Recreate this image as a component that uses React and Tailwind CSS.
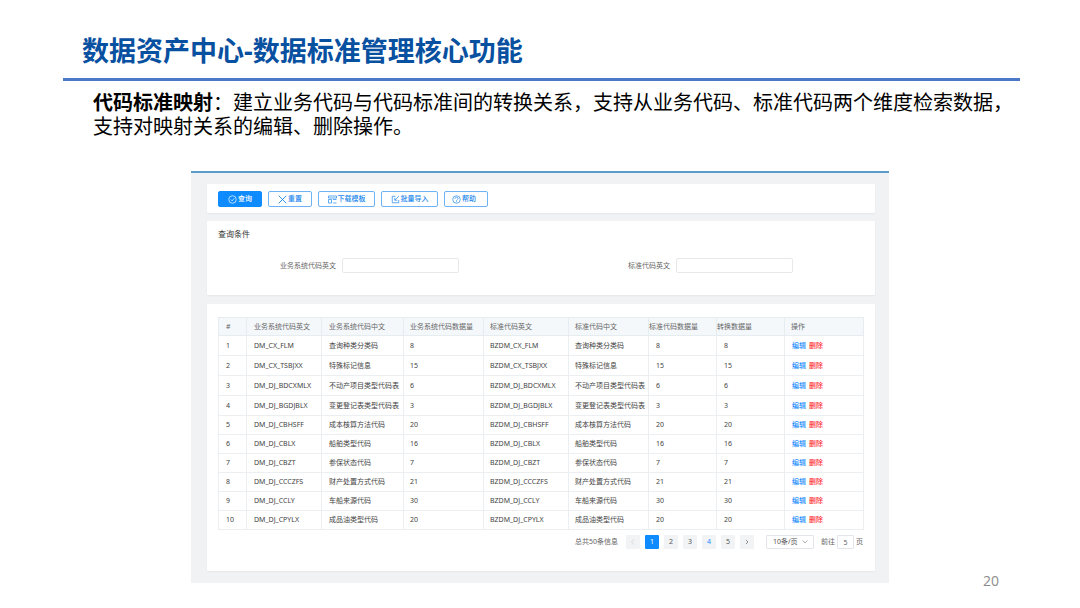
import { useState } from 'react';

const columns = [
    { title: '#', width: 'w-[28px]', pad: 'pl-[7px]' },
    { title: '业务系统代码英文', width: 'w-[75px]', pad: 'pl-[7px]' },
    { title: '业务系统代码中文', width: 'w-[82px]', pad: 'pl-[7px]' },
    { title: '业务系统代码数据量', width: 'w-[80px]', pad: 'pl-[6px]' },
    { title: '标准代码英文', width: 'w-[85px]', pad: 'pl-[6px]' },
    { title: '标准代码中文', width: 'w-[80px]', pad: 'pl-[6px]' },
    { title: '标准代码数据量', width: 'w-[68px]', pad: 'pl-0' },
    { title: '转换数据量', width: 'w-[68px]', pad: 'pl-0' },
    { title: '操作', width: 'w-[79px]', pad: 'pl-[6px]' },
];

const rows = [
    { code: 'DM_CX_FLM', name: '查询种类分类码', count: 8 },
    { code: 'DM_CX_TSBJXX', name: '特殊标记信息', count: 15 },
    { code: 'DM_DJ_BDCXMLX', name: '不动产项目类型代码表', count: 6 },
    { code: 'DM_DJ_BGDJBLX', name: '变更登记表类型代码表', count: 3 },
    { code: 'DM_DJ_CBHSFF', name: '成本核算方法代码', count: 20 },
    { code: 'DM_DJ_CBLX', name: '船舶类型代码', count: 16 },
    { code: 'DM_DJ_CBZT', name: '参保状态代码', count: 7 },
    { code: 'DM_DJ_CCCZFS', name: '财产处置方式代码', count: 21 },
    { code: 'DM_DJ_CCLY', name: '车船来源代码', count: 30 },
    { code: 'DM_DJ_CPYLX', name: '成品油类型代码', count: 20 },
];

const Icon = ({ children }) => (
    <svg viewBox="0 0 18 18" fill="none" stroke="currentColor" strokeWidth="1.4" className="w-[9px] h-[9px] shrink-0" aria-hidden="true">
        {children}
    </svg>
);

const SearchIcon = () => (
    <Icon>
        <circle cx="9" cy="9" r="7.5" />
        <path d="M5.5 9l2.7 2.8 4.6-5.2" />
    </Icon>
);

const ResetIcon = () => (
    <Icon>
        <path d="M1.5 1.5l15 15M16.5 1.5l-15 15" strokeWidth="1.8" />
    </Icon>
);

const TemplateIcon = () => (
    <Icon>
        <path d="M1 2h16v4H1zM1 9h6v7H1zM10 9h7M10 16h7" />
    </Icon>
);

const ImportIcon = () => (
    <Icon>
        <path d="M9 2.500H2.500v13h13V10" />
        <path d="M16 2L8 10M7.500 5.500v5h5" />
    </Icon>
);

const HelpIcon = () => (
    <Icon>
        <circle cx="9" cy="9" r="7.5" />
        <path d="M6 7.500C6 3.500 12 3.500 12 7c0 1.800-3 2-3 4.500M9 12.500v1.700" />
    </Icon>
);

const actions = [
    { label: '查询', icon: SearchIcon, style: 'w-[44px] border-[#0d8bff] bg-[#0d8bff] text-white' },
    { label: '重置', icon: ResetIcon, style: 'w-[44px] border-[#6db4f6] bg-white text-[#1b87ee]' },
    { label: '下载模板', icon: TemplateIcon, style: 'w-[57px] border-[#6db4f6] bg-white text-[#1b87ee]' },
    { label: '批量导入', icon: ImportIcon, style: 'w-[57px] border-[#6db4f6] bg-white text-[#1b87ee]' },
    { label: '帮助', icon: HelpIcon, style: 'w-[44px] pr-[4px] border-[#6db4f6] bg-white text-[#1b87ee]' },
];

const SearchField = ({ id, label }) => (
    <div className="flex items-center gap-[6px]">
        <label htmlFor={id} className="w-[129px] text-right text-[#666]">{label}</label>
        <input id={id} type="text" className="w-[117px] h-[15px] px-1 bg-white border border-[#e6e8eb] rounded-[2px] outline-none" />
    </div>
);

const MappingTable = () => (
    <table className="w-full table-fixed border-collapse text-left text-[#444]">
        <thead>
            <tr className="h-[18px] bg-[#f4f8fb] text-[#666]">
                {columns.map((col) => (
                    <th key={col.title} className={`${col.width} ${col.pad} border border-[#e6edf1] font-normal whitespace-nowrap`}>{col.title}</th>
                ))}
            </tr>
        </thead>
        <tbody>
            {rows.map((row, i) => (
                <tr key={row.code} className={i < 4 ? 'h-[20px]' : 'h-[19px]'}>
                    {[i + 1, row.code, row.name, row.count, `BZ${row.code}`, row.name, row.count, row.count].map((value, j) => (
                        <td key={j} className={`${j >= 3 && j <= 5 ? 'pl-[6px]' : 'pl-[7px]'} border border-[#eceff1] whitespace-nowrap`}>{value}</td>
                    ))}
                    <td className="pl-[7px] border border-[#eceff1] whitespace-nowrap font-medium">
                        <span className="flex gap-[3px]">
                            <a href="#edit" className="text-[#1b8dff]">编辑</a>
                            <a href="#delete" className="text-[#ff2a32]">删除</a>
                        </span>
                    </td>
                </tr>
            ))}
        </tbody>
    </table>
);

const Pagination = () => {
    const [page, setPage] = useState(1);
    const [jump, setJump] = useState('5');

    const pageStyle = (n) => {
        if (n === page) return 'bg-[#0d8bff] text-white';
        if (n === 4) return 'bg-[#f1f3f5] text-[#1b8dff]';
        return 'bg-[#f1f3f5] text-[#555]';
    };

    return (
        <div className="mt-[5px] flex items-center justify-end text-[#666]">
            <span>总共50条信息</span>
            <div className="ml-[8px] flex gap-[5px]">
                <button aria-label="上一页" onClick={() => setPage(Math.max(1, page - 1))} className="w-[14px] h-[14px] flex items-center justify-center rounded-[1px] bg-[#f1f3f5] text-[#c8ccd2]">
                    <svg viewBox="0 0 6 6" fill="none" stroke="currentColor" className="w-[6px] h-[6px]"><path d="M4 .5L1.500 3 4 5.500" strokeWidth=".7" /></svg>
                </button>
                {[1, 2, 3, 4, 5].map((n) => (
                    <button key={n} onClick={() => setPage(n)} className={`w-[14px] h-[14px] rounded-[1px] ${pageStyle(n)}`}>{n}</button>
                ))}
                <button aria-label="下一页" onClick={() => setPage(Math.min(5, page + 1))} className="w-[14px] h-[14px] flex items-center justify-center rounded-[1px] bg-[#f1f3f5] text-[#666]">
                    <svg viewBox="0 0 6 6" fill="none" stroke="currentColor" className="w-[6px] h-[6px]"><path d="M2 1L4 3 2 5" strokeWidth=".7" /></svg>
                </button>
            </div>
            <div className="relative ml-[12px]">
                <select aria-label="每页条数" className="block w-[48px] h-[14px] pl-[6px] leading-[12px] appearance-none bg-white border border-[#e2e5e9] rounded-[1px] text-[#555]">
                    <option>10条/页</option>
                    <option>20条/页</option>
                    <option>50条/页</option>
                </select>
                <svg viewBox="0 0 6 6" fill="none" stroke="#999" strokeWidth=".8" className="absolute right-[6px] top-[4px] w-[6px] h-[6px] pointer-events-none"><path d="M.5 1.500L3 4l2.500-2.500" /></svg>
            </div>
            <label htmlFor="jump" className="ml-[7px]">前往</label>
            <input id="jump" value={jump} onChange={(e) => setJump(e.target.value)} className="mx-[2px] w-[17px] h-[14px] leading-[12px] text-center bg-white border border-[#e2e5e9] rounded-[1px] outline-none" />
            <span>页</span>
        </div>
    );
};

export default function App() {
    return (
        <div className="min-h-screen bg-white font-['Noto_Sans','Noto_Sans_CJK_SC',sans-serif]">
            <header className="ml-[63px] mr-[60px] pt-[33px] border-b-3 border-[#4c78c8]">
                <h1 className="pl-[19px] pb-[9px] text-[27px] leading-[36px] font-bold text-[#0850a0]">数据资产中心-数据标准管理核心功能</h1>
            </header>

            <p className="mt-[9px] ml-[93px] mr-[60px] text-[20px] leading-[24px] text-black font-['Noto_Sans_CJK_SC',sans-serif]">
                <strong className="font-bold">代码标准映射</strong>：建立业务代码与代码标准间的转换关系，支持从业务代码、标准代码两个维度检索数据，支持对映射关系的编辑、删除操作。
            </p>

            <div className="mt-[33px] pl-[191px] flex items-end">
                {/* System window */}
                <main className="flex-1 min-w-0 mb-[6px] pt-[11px] pr-[14px] pb-[12px] pl-[16px] bg-[#f0f2f4] border-t-2 border-[#5a9dca] text-[7px] leading-[12px]">
                    <div className="pt-[7px] pb-[6px] px-[11px] flex gap-[6px] bg-white rounded-[1px] shadow-xs">
                        {actions.map(({ label, icon: ActionIcon, style }) => (
                            <button key={label} className={`h-[16px] flex items-center justify-center gap-px border rounded-[2px] font-medium whitespace-nowrap ${style}`}>
                                <ActionIcon />
                                {label}
                            </button>
                        ))}
                    </div>

                    <section className="mt-[8px] pt-[7px] pb-[22px] bg-white rounded-[1px] shadow-xs">
                        <h2 className="pl-[11px] text-[8px] leading-[12px] text-[#333]">查询条件</h2>
                        <div className="mt-[18px] grid grid-cols-2">
                            <SearchField id="bizCode" label="业务系统代码英文" />
                            <SearchField id="stdCode" label="标准代码英文" />
                        </div>
                    </section>

                    <section className="mt-[9px] pt-[13px] pb-[22px] pl-[11px] pr-[12px] bg-white rounded-[1px] shadow-xs">
                        <MappingTable />
                        <Pagination />
                    </section>
                </main>

                <div className="w-[191px] pl-[94px] text-[14px] leading-[16px] text-[#8c8c8c] font-['Open_Sans',sans-serif]">20</div>
            </div>
        </div>
    );
}
